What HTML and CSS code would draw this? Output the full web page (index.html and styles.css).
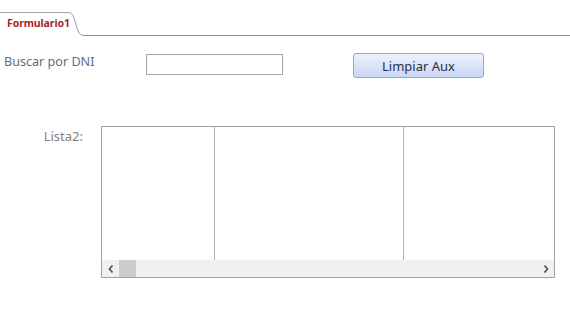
FILE: index.html
```html
<!DOCTYPE html>
<html lang="es">
<head>
    <meta charset="UTF-8">
    <title>Formulario1</title>
    <link rel="stylesheet" href="styles.css">
</head>
<body>

    <!-- Tab strip -->
    <div class="tabs">
        <div class="tab">Formulario1</div>
        <svg class="tab-curve" width="16" height="24" viewBox="0 0 16 24">
            <path d="M0 0.5 C4 0.5 5 3 7 9 C9 16 10 23.5 16 23.5" fill="none" stroke="#9a9a9a" stroke-width="1"/>
        </svg>
        <div class="tab-rest"></div>
    </div>

    <!-- Search row -->
    <div class="search-row">
        <label class="label search-label">Buscar por DNI</label>
        <input class="text-box" type="text">
        <button class="button">Limpiar Aux</button>
    </div>

    <!-- List row -->
    <div class="list-row">
        <label class="label list-label">Lista2:</label>
        <div class="list-box">
            <div class="columns">
                <div class="col col-1"></div>
                <div class="col col-2"></div>
                <div class="col col-3"></div>
            </div>
            <div class="scrollbar">
                <div class="arrow">
                    <svg width="6" height="8" viewBox="0 0 6 8"><path d="M4.5 0.5 L1.5 4 L4.5 7.5" fill="none" stroke="#555" stroke-width="1.7"/></svg>
                </div>
                <div class="thumb"></div>
                <div class="track"></div>
                <div class="arrow">
                    <svg width="6" height="8" viewBox="0 0 6 8"><path d="M1.5 0.5 L4.5 4 L1.5 7.5" fill="none" stroke="#555" stroke-width="1.7"/></svg>
                </div>
            </div>
        </div>
    </div>

</body>
</html>
```

FILE: styles.css
```css
body, html {
    margin: 0;
    padding: 0;
    width: 100%;
    height: 100%;
    background: #fff;
    font-family: "Noto Sans", "Open Sans", sans-serif;
    overflow: hidden;
}

.tabs {
    display: flex;
    align-items: flex-start;
    padding-top: 12px;
    height: 24px;
}

.tab {
    width: 68px;
    height: 23px;
    box-sizing: border-box;
    border-top: 1px solid #a8a8a8;
    padding: 3px 0 0 7px;
    font-size: 10.5px;
    line-height: 15px;
    font-weight: bold;
    letter-spacing: -0.1px;
    color: #a3262a;
    white-space: nowrap;
}

.tab-curve {
    display: block;
    flex: none;
}

.tab-rest {
    flex: 1;
    height: 23px;
    border-bottom: 1px solid #8c8c8c;
}

.label {
    font-size: 13px;
    line-height: 16px;
    white-space: nowrap;
}

.search-row {
    display: flex;
    align-items: flex-start;
    margin-top: 17px;
}

.search-label {
    width: 142px;
    padding-left: 4px;
    margin-top: 1px;
    font-size: 12.6px;
    color: #5d6e84;
}

.text-box {
    width: 137px;
    height: 21px;
    box-sizing: border-box;
    margin: 1px 0 0 0;
    padding: 0;
    border: 1px solid #a4a4a4;
    background: #fff;
    outline: none;
}

.button {
    width: 131px;
    height: 25px;
    margin-left: 70px;
    padding: 0;
    box-sizing: border-box;
    border: 1px solid #90a6d6;
    border-radius: 3px;
    background: linear-gradient(#ecf1fd, #c9d7f5);
    font-family: "Noto Sans", "Open Sans", sans-serif;
    font-size: 13px;
    color: #2c2f3a;
}

.list-row {
    display: flex;
    align-items: flex-start;
    margin-top: 48px;
}

.list-label {
    width: 83px;
    margin-right: 18px;
    margin-top: 2px;
    text-align: right;
    color: #7f7f7f;
}

.list-box {
    width: 454px;
    height: 152px;
    box-sizing: border-box;
    border: 1px solid #a0a0a0;
    display: flex;
    flex-direction: column;
}

.columns {
    flex: 1;
    display: flex;
}

.col {
    height: 100%;
}

.col-1 {
    width: 112px;
    border-right: 1px solid #b4b4b4;
}

.col-2 {
    width: 188px;
    border-right: 1px solid #b4b4b4;
}

.col-3 {
    flex: 1;
}

.scrollbar {
    height: 17px;
    display: flex;
    background: #f0f0f0;
}

.arrow {
    width: 17px;
    display: flex;
    align-items: center;
    justify-content: center;
}

.arrow svg {
    display: block;
}

.thumb {
    width: 17px;
    background: #cdcdcd;
}

.track {
    flex: 1;
}
```
